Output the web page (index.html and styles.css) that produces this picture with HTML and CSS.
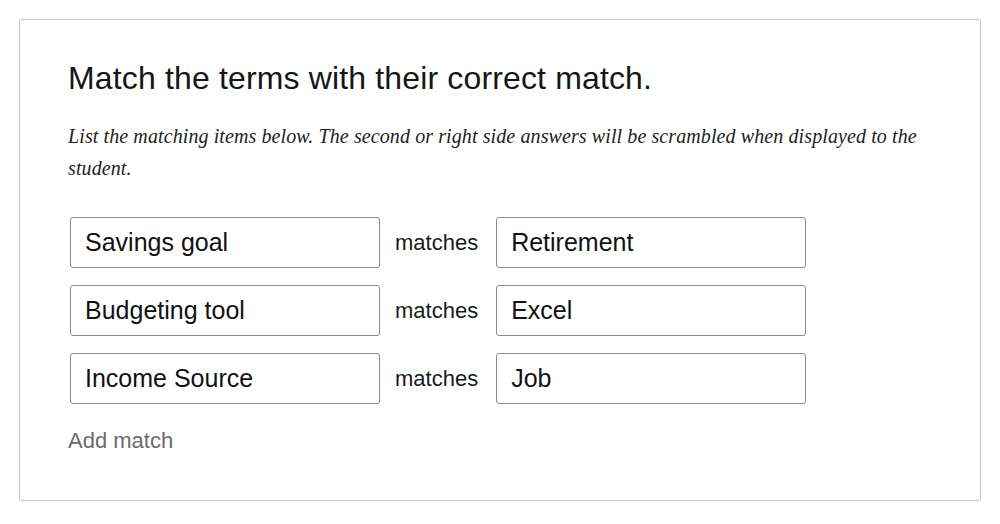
FILE: index.html
```html
<!DOCTYPE html>
<html lang="en">
<head>
  <meta charset="UTF-8">
  <title>Matching question</title>
  <link rel="stylesheet" href="styles.css">
</head>
<body>

  <div class="card">
    <h2 class="question">Match the terms with their correct match.</h2>
    <p class="hint">List the matching items below. The second or right side answers will be scrambled when displayed to the student.</p>

    <div class="pairs">
      <div class="pair">
        <input class="term" type="text" value="Savings goal">
        <span class="sep">matches</span>
        <input class="term" type="text" value="Retirement">
      </div>
      <div class="pair">
        <input class="term" type="text" value="Budgeting tool">
        <span class="sep">matches</span>
        <input class="term" type="text" value="Excel">
      </div>
      <div class="pair">
        <input class="term" type="text" value="Income Source">
        <span class="sep">matches</span>
        <input class="term" type="text" value="Job">
      </div>
    </div>

    <div class="add_match">Add match</div>
  </div>

</body>
</html>
```

FILE: styles.css
```css
body {
  margin: 0;
  background: #fff;
  font-family: "Liberation Sans", Arial, sans-serif;
  color: #1a1a1a;
}

.card {
  margin: 19px;
  padding: 39px 48px 47px;
  border: 1px solid #c6c6c6;
  border-radius: 3px;
}

.question {
  margin: 0;
  font-size: 32px;
  font-weight: normal;
  line-height: 38px;
  letter-spacing: 0.15px;
  color: #161616;
}

.hint {
  margin: 23px 0 0;
  font-family: "Liberation Serif", "Times New Roman", serif;
  font-style: italic;
  font-size: 20px;
  line-height: 32px;
  letter-spacing: 0.1px;
  color: #222;
}

.pairs {
  display: flex;
  flex-direction: column;
  gap: 17px;
  margin-top: 33px;
}

.pair {
  display: flex;
  align-items: center;
  padding-left: 2px;
}

.term {
  box-sizing: border-box;
  width: 310px;
  height: 51px;
  margin: 0;
  padding: 0 14px;
  border: 1px solid #8c8c8c;
  border-radius: 3px;
  font-family: "Liberation Sans", Arial, sans-serif;
  font-size: 25px;
  color: #111;
  background: #fff;
  outline: none;
}

.sep {
  padding: 0 18px 0 15px;
  font-size: 22px;
  color: #1a1a1a;
}

.add_match {
  margin-top: 24px;
  font-size: 22px;
  line-height: 25px;
  color: #6b6b6b;
  cursor: pointer;
}
```
